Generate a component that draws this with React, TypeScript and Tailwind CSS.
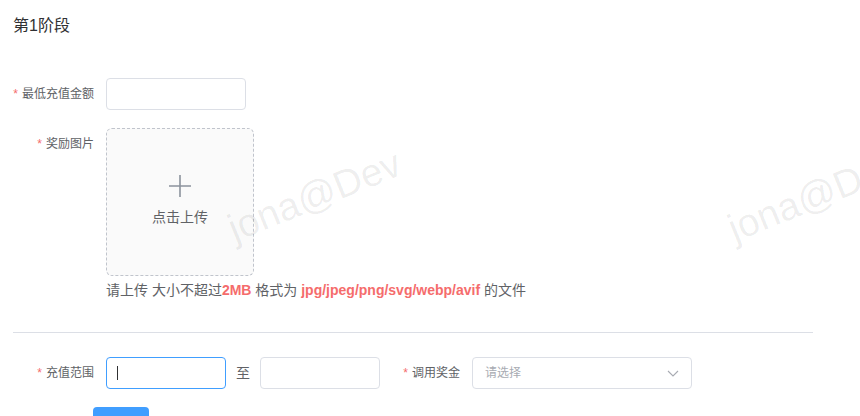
import React from 'react'

const fontStack = "font-['Liberation_Sans','Noto_Sans_CJK_SC',sans-serif]"

function Label({ text, className = '' }: { text: string; className?: string }) {
  return (
    <div className={`flex h-8 shrink-0 items-center justify-end text-[12px] text-[#606266] ${className}`}>
      <span className="mr-1 text-[#f56c6c]">*</span>
      {text}
    </div>
  )
}

function Watermark({ className }: { className: string }) {
  return (
    <span
      className={`pointer-events-none absolute origin-center -rotate-[22deg] select-none whitespace-nowrap text-[39px] leading-[45px] text-[#000000]/[0.07] ${className}`}
    >
      jona@Dev
    </span>
  )
}

export default function App() {
  return (
    <div className={`relative h-[416px] w-[860px] overflow-hidden bg-white ${fontStack}`}>
      <div className="px-[13px]">
        <h3 className="pt-4 text-[16px] leading-5 text-[#303133]">第1阶段</h3>

        {/* 最低充值金额 */}
        <div className="mt-[42px] flex">
          <Label text="最低充值金额" className="w-[93px] pr-3" />
          <div className="h-8 w-[140px] rounded border border-[#dcdfe6] bg-white" />
        </div>

        {/* 奖励图片 */}
        <div className="mt-[18px] flex">
          <Label text="奖励图片" className="w-[93px] pr-3" />
          <div>
            <div className="flex h-[148px] w-[148px] flex-col items-center rounded-md border border-dashed border-[#c0c4cc] bg-[#fafafa]">
              <svg width="24" height="24" viewBox="0 0 24 24" className="mt-[45px]">
                <path d="M12 1v22M1 12h22" stroke="#8c939d" strokeWidth="1.6" fill="none" />
              </svg>
              <span className="mt-[9px] text-[14px] leading-5 text-[#606266]">点击上传</span>
            </div>
            <p className="mt-[3px] whitespace-nowrap text-[14px] leading-[22px] text-[#606266]">
              请上传 大小不超过<b className="font-bold text-[#f56c6c]">2MB</b> 格式为{' '}
              <b className="font-bold text-[#f56c6c]">jpg/jpeg/png/svg/webp/avif</b> 的文件
            </p>
          </div>
        </div>

        <div className="mt-[31px] h-px w-[800px] bg-[#dcdfe6]" />

        {/* 充值范围 / 调用奖金 */}
        <div className="mt-6 flex items-center">
          <Label text="充值范围" className="w-[93px] pr-3" />
          <div className="flex h-8 w-[120px] items-center rounded border border-[#409eff] pl-[10px]">
            <span className="h-[14px] w-px bg-[#303133]" />
          </div>
          <span className="mx-[10px] text-[14px] text-[#606266]">至</span>
          <div className="h-8 w-[120px] rounded border border-[#dcdfe6]" />
          <Label text="调用奖金" className="w-[92px] pr-3" />
          <div className="flex h-8 w-[220px] items-center justify-between rounded border border-[#dcdfe6] pl-3 pr-[11px]">
            <span className="text-[12px] text-[#a8abb2]">请选择</span>
            <svg width="14" height="14" viewBox="0 0 14 14">
              <path d="M2 5l5 5 5-5" stroke="#a8abb2" strokeWidth="1.1" fill="none" />
            </svg>
          </div>
        </div>

        <div className="mt-[18px] pl-[80px]">
          <button className="h-8 w-[56px] rounded bg-[#409eff]" />
        </div>
      </div>

      <Watermark className="left-[223px] top-[173px]" />
      <Watermark className="left-[723px] top-[173px]" />
    </div>
  )
}
